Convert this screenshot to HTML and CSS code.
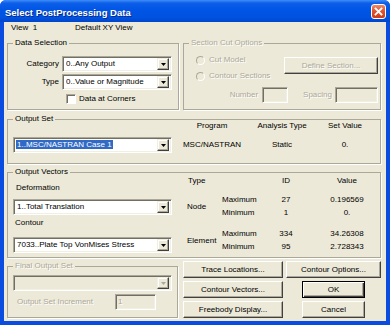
FILE: index.html
```html
<!DOCTYPE html>
<html lang="en">
<head>
    <meta charset="UTF-8">
    <meta name="viewport" content="width=device-width, initial-scale=1.0">
    <title>Select PostProcessing Data</title>
    <link rel="stylesheet" href="styles.css">
</head>
<body>

<div class="window">
    <div class="titlebar">
        <span class="title">Select PostProcessing Data</span>
        <span class="close">
            <svg width="9" height="9" viewBox="0 0 9 9"><path d="M1.5 1.5L7.5 7.5M7.5 1.5L1.5 7.5" stroke="#fff" stroke-width="1.8" stroke-linecap="square"/></svg>
        </span>
    </div>

    <div class="dialog">
        <div class="view-row">
            <span class="view-id">View&nbsp;&nbsp;1</span>
            <span>Default XY View</span>
        </div>

        <div class="top-row">
            <fieldset class="group data-sel">
                <legend>Data Selection</legend>
                <div class="field-row">
                    <span class="field-label">Category</span>
                    <div class="combo sel-combo">
                        <span class="combo-text">0..Any Output</span>
                        <span class="drop"><svg width="5" height="3" viewBox="0 0 5 3"><path d="M0 0H5L2.5 3Z" fill="#000"/></svg></span>
                    </div>
                </div>
                <div class="field-row">
                    <span class="field-label">Type</span>
                    <div class="combo sel-combo">
                        <span class="combo-text">0..Value or Magnitude</span>
                        <span class="drop"><svg width="5" height="3" viewBox="0 0 5 3"><path d="M0 0H5L2.5 3Z" fill="#000"/></svg></span>
                    </div>
                </div>
                <div class="check-row">
                    <span class="checkbox"></span>
                    <span>Data at Corners</span>
                </div>
            </fieldset>

            <fieldset class="group cut">
                <legend class="dis">Section Cut Options</legend>
                <div class="cut-top">
                    <div class="radios">
                        <div class="radio-row"><span class="radio"></span><span class="dis">Cut Model</span></div>
                        <div class="radio-row"><span class="radio"></span><span class="dis">Contour Sections</span></div>
                    </div>
                    <div class="btn define"><span class="dis">Define Section...</span></div>
                </div>
                <div class="cut-bottom">
                    <span class="dis">Number</span>
                    <span class="edit num"></span>
                    <span class="dis spacing-label">Spacing</span>
                    <span class="edit spacing"></span>
                </div>
            </fieldset>
        </div>

        <fieldset class="group out-set">
            <legend>Output Set</legend>
            <div class="set-body">
                <div class="combo set-combo">
                    <span class="combo-text"><span class="sel">1..MSC/NASTRAN Case 1</span></span>
                    <span class="drop"><svg width="5" height="3" viewBox="0 0 5 3"><path d="M0 0H5L2.5 3Z" fill="#000"/></svg></span>
                </div>
                <div class="set-table">
                    <span>Program</span>
                    <span>Analysis Type</span>
                    <span>Set Value</span>
                    <span>MSC/NASTRAN</span>
                    <span>Static</span>
                    <span>0.</span>
                </div>
            </div>
        </fieldset>

        <fieldset class="group out-vec">
            <legend>Output Vectors</legend>
            <div class="vec-body">
                <div class="vec-left">
                    <div class="vec-label">Deformation</div>
                    <div class="combo vec-combo">
                        <span class="combo-text">1..Total Translation</span>
                        <span class="drop"><svg width="5" height="3" viewBox="0 0 5 3"><path d="M0 0H5L2.5 3Z" fill="#000"/></svg></span>
                    </div>
                    <div class="vec-label contour">Contour</div>
                    <div class="combo vec-combo second">
                        <span class="combo-text">7033..Plate Top VonMises Stress</span>
                        <span class="drop"><svg width="5" height="3" viewBox="0 0 5 3"><path d="M0 0H5L2.5 3Z" fill="#000"/></svg></span>
                    </div>
                </div>

                <div class="vec-table">
                    <div class="vec-head">
                        <span class="c-type head-type">Type</span>
                        <span class="c-lbl"></span>
                        <span class="c-id">ID</span>
                        <span class="c-val">Value</span>
                    </div>
                    <div class="vec-group">
                        <span class="c-type">Node</span>
                        <div class="vec-rows">
                            <div class="vec-row"><span class="c-lbl">Maximum</span><span class="c-id">27</span><span class="c-val">0.196569</span></div>
                            <div class="vec-row"><span class="c-lbl">Minimum</span><span class="c-id">1</span><span class="c-val">0.</span></div>
                        </div>
                    </div>
                    <div class="vec-group element">
                        <span class="c-type">Element</span>
                        <div class="vec-rows">
                            <div class="vec-row"><span class="c-lbl">Maximum</span><span class="c-id">334</span><span class="c-val">34.26308</span></div>
                            <div class="vec-row"><span class="c-lbl">Minimum</span><span class="c-id">95</span><span class="c-val">2.728343</span></div>
                        </div>
                    </div>
                </div>
            </div>
        </fieldset>

        <div class="bottom-row">
            <fieldset class="group final">
                <legend class="dis">Final Output Set</legend>
                <div class="combo disabled final-combo">
                    <span class="combo-text"></span>
                    <span class="drop"><svg width="5" height="3" viewBox="0 0 5 3"><path d="M0 0H5L2.5 3Z" fill="#aca899"/></svg></span>
                </div>
                <div class="inc-row">
                    <span class="dis inc-label">Output Set Increment</span>
                    <span class="edit inc"><span class="dis">1</span></span>
                </div>
            </fieldset>

            <div class="buttons">
                <div class="btn">Trace Locations...</div>
                <div class="btn">Contour Options...</div>
                <div class="btn">Contour Vectors...</div>
                <div class="btn default narrow">OK</div>
                <div class="btn">Freebody Display...</div>
                <div class="btn narrow">Cancel</div>
            </div>
        </div>
    </div>
</div>

</body>
</html>
```

FILE: styles.css
```css
body {
    margin: 0;
    padding: 0;
    background-color: #fff;
    font-family: "Liberation Sans", Arial, sans-serif;
    font-size: 8px;
    line-height: 10px;
    color: #000;
}
.window {
    width: 390px;
    height: 325px;
    display: flex;
    flex-direction: column;
    background-color: #0a4be0; /* XP frame blue */
    border-radius: 6px 6px 0 0;
    overflow: hidden;
}
.titlebar {
    height: 22px;
    flex: none;
    display: flex;
    align-items: center;
    justify-content: space-between;
    padding: 0 4px 0 5px;
    background: linear-gradient(to bottom, #3f8ef8 0%, #0d5fe9 14%, #0055e5 45%, #0052e0 80%, #0045cb 100%);
}
.title {
    color: #fff;
    font-size: 9.5px;
    font-weight: bold;
    padding-top: 3px;
    text-shadow: 1px 1px #0a2a8a;
}
.close {
    width: 15px;
    height: 15px;
    box-sizing: border-box;
    margin-top: 1px;
    border: 1px solid #fff;
    border-radius: 3px;
    background: linear-gradient(to bottom, #ec8a6c 0%, #e0552f 45%, #cf3b14 100%);
    display: flex;
    align-items: center;
    justify-content: center;
}
.dialog {
    flex: 1;
    margin: 0 4px 4px 4px;
    padding: 0 5px 0 3px;
    background-color: #ece9d8;
}
.dis {
    color: #aca899;
    text-shadow: 1px 1px #fff;
}

/* header line */
.view-row {
    display: flex;
    padding: 1px 0 0 4px;
    height: 10px;
    margin-bottom: 5px;
}
.view-id {
    width: 64px;
}

/* group boxes */
.group {
    margin: 0;
    padding: 0;
    min-width: 0;
    box-sizing: border-box;
    border: 1px solid #aca899;
    box-shadow: 1px 1px 0 #fff;
}
.group legend {
    margin-left: 5px;
    padding: 0 2px;
    line-height: 10px;
}
.top-row {
    display: flex;
    gap: 4px;
    height: 72px;
}
.data-sel {
    width: 172px;
    height: 72px;
    padding-top: 8px;
}
.cut {
    flex: 1;
    height: 72px;
}

/* combo boxes */
.combo {
    height: 16px;
    box-sizing: border-box;
    display: flex;
    align-items: center;
    padding: 1px 2px 1px 3px;
    background-color: #fff;
    border: 1px solid;
    border-color: #aca899 #fff #fff #aca899;
    box-shadow: inset 1px 1px #716f64, inset -1px -1px #f1efe2;
    white-space: nowrap;
}
.combo-text {
    flex: 1;
    overflow: hidden;
}
.drop {
    width: 12px;
    height: 12px;
    box-sizing: border-box;
    display: flex;
    align-items: center;
    justify-content: center;
    background-color: #ece9d8;
    border: 1px solid;
    border-color: #f1efe2 #404040 #404040 #f1efe2;
    box-shadow: inset -1px -1px #aca899, inset 1px 1px #fff;
}
.combo.disabled {
    background-color: #ece9d8;
}

.field-row {
    display: flex;
    align-items: center;
    gap: 3px;
    margin-bottom: 2px;
}
.field-label {
    width: 51px;
    text-align: right;
}
.sel-combo {
    width: 110px;
}
.check-row {
    display: flex;
    align-items: center;
    gap: 3px;
    margin: 4px 0 0 58px;
}
.checkbox {
    width: 10px;
    height: 10px;
    box-sizing: border-box;
    background-color: #fff;
    border: 1px solid;
    border-color: #aca899 #fff #fff #aca899;
    box-shadow: inset 1px 1px #716f64;
}

/* section cut options */
.cut-top {
    display: flex;
    justify-content: space-between;
    padding: 7px 2px 0 12px;
}
.radios {
    display: flex;
    flex-direction: column;
    gap: 6px;
}
.radio-row {
    display: flex;
    align-items: center;
    gap: 4px;
}
.radio {
    width: 9px;
    height: 9px;
    box-sizing: border-box;
    border-radius: 50%;
    border: 1px solid;
    border-color: #aca899 #fff #fff #aca899;
    background-color: #ece9d8;
}
.btn {
    height: 17px;
    box-sizing: border-box;
    display: flex;
    align-items: center;
    justify-content: center;
    background-color: #ece9d8;
    border: 1px solid;
    border-color: #fff #404040 #404040 #fff;
    box-shadow: inset -1px -1px #aca899;
    white-space: nowrap;
}
.btn.default {
    border-color: #000;
    box-shadow: inset 1px 1px #fff, inset -1px -1px #404040, inset -2px -2px #aca899;
}
.define {
    width: 94px;
    margin-top: 2px;
}
.cut-bottom {
    display: flex;
    justify-content: flex-end;
    align-items: center;
    margin-top: 6px;
    padding-right: 2px;
}
.edit {
    height: 16px;
    box-sizing: border-box;
    display: flex;
    align-items: center;
    padding-left: 2px;
    background-color: #ece9d8;
    border: 1px solid;
    border-color: #aca899 #fff #fff #aca899;
    box-shadow: inset 1px 1px #716f64, inset -1px -1px #f1efe2;
}
.edit.num {
    width: 26px;
    margin-left: 4px;
}
.spacing-label {
    margin-left: 15px;
}
.edit.spacing {
    width: 43px;
    margin-left: 3px;
}

/* output set */
.out-set {
    height: 50px;
    margin-top: 4px;
}
.set-body {
    display: flex;
    align-items: flex-start;
    padding-left: 5px;
}
.set-combo {
    width: 159px;
    margin-top: 13px;
    padding-left: 2px;
}
.sel {
    background-color: #316ac5;
    color: #fff;
    padding: 0 1px;
}
.set-table {
    display: grid;
    grid-template-columns: 80px 60px 66px;
    row-gap: 9px;
    margin-top: -3px;
    text-align: center;
}

/* output vectors */
.out-vec {
    height: 91px;
    margin-top: 3px;
}
.vec-body {
    display: flex;
    padding-left: 5px;
}
.vec-left {
    width: 159px;
    padding-top: 6px;
}
.vec-label {
    padding-left: 3px;
}
.vec-label.contour {
    padding-left: 2px;
    margin-top: 3px;
}
.vec-combo {
    margin-top: 6px;
}
.vec-combo.second {
    margin-top: 9px;
}
.vec-table {
    margin: -1px 0 0 14px;
}
.vec-head,
.vec-row {
    display: flex;
    height: 10px;
}
.vec-group {
    display: flex;
    align-items: center;
    margin-top: 9px;
}
.vec-group.element {
    margin-top: 11px;
}
.vec-rows {
    display: flex;
    flex-direction: column;
    gap: 3px;
}
.c-type {
    width: 36px;
    padding-left: 1px;
    box-sizing: border-box;
}
.head-type {
    padding-left: 2px;
}
.c-lbl {
    width: 48px;
}
.c-id {
    width: 32px;
    text-align: center;
}
.c-val {
    width: 62px;
    margin-left: 14px;
    text-align: center;
}

/* bottom area */
.bottom-row {
    display: flex;
    gap: 5px;
    margin-top: 3px;
}
.final {
    width: 171px;
    height: 57px;
}
.final-combo {
    width: 159px;
    margin: 4px 0 0 5px;
}
.inc-row {
    display: flex;
    align-items: center;
    margin-top: 3px;
    padding-left: 9px;
}
.inc-label {
    width: 98px;
}
.edit.inc {
    width: 41px;
}
.buttons {
    display: grid;
    grid-template-columns: 100px 95px;
    grid-auto-rows: 17px;
    gap: 3px;
}
.btn.narrow {
    width: 63px;
    justify-self: center;
}
```
